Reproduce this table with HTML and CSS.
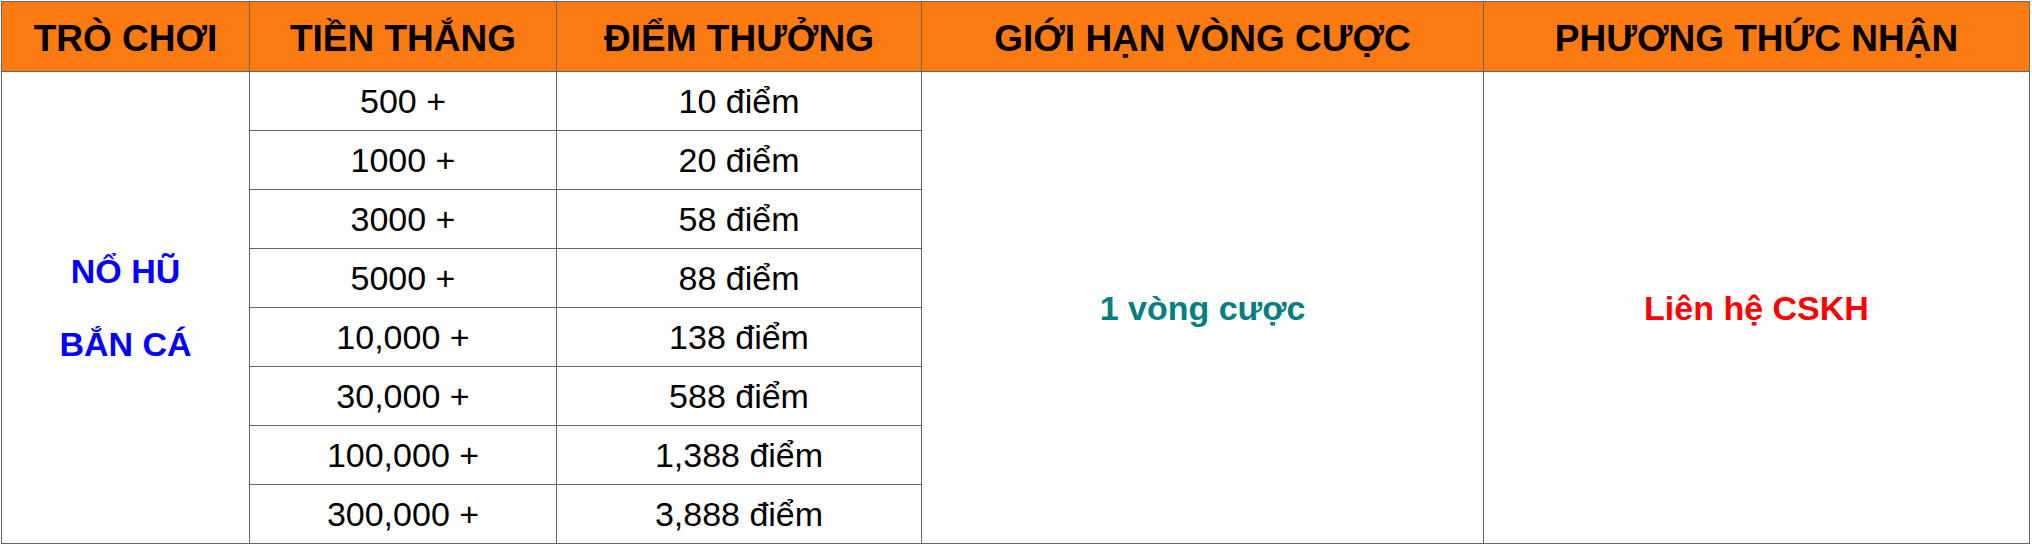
FILE: index.html
```html
<!DOCTYPE html>
<html lang="vi">
<head>
<meta charset="utf-8">
<title>Bảng thưởng</title>
<link rel="stylesheet" href="styles.css">
</head>
<body>
<div class="table">
  <div class="cell head">TRÒ CHƠI</div>
  <div class="cell head">TIỀN THẮNG</div>
  <div class="cell head">ĐIỂM THƯỞNG</div>
  <div class="cell head">GIỚI HẠN VÒNG CƯỢC</div>
  <div class="cell head">PHƯƠNG THỨC NHẬN</div>

  <div class="cell span game"><div class="game-text">NỔ HŨ<br>BẮN CÁ</div></div>
  <div class="cell">500 +</div>
  <div class="cell">10 điểm</div>
  <div class="cell span col4 wager">1 vòng cược</div>
  <div class="cell span col5 contact">Liên hệ CSKH</div>

  <div class="cell">1000 +</div>
  <div class="cell">20 điểm</div>
  <div class="cell">3000 +</div>
  <div class="cell">58 điểm</div>
  <div class="cell">5000 +</div>
  <div class="cell">88 điểm</div>
  <div class="cell">10,000 +</div>
  <div class="cell">138 điểm</div>
  <div class="cell">30,000 +</div>
  <div class="cell">588 điểm</div>
  <div class="cell">100,000 +</div>
  <div class="cell">1,388 điểm</div>
  <div class="cell">300,000 +</div>
  <div class="cell">3,888 điểm</div>
</div>
</body>
</html>
```
FILE: styles.css
```css
html, body {
  margin: 0;
  padding: 0;
  background: #ffffff;
}
body {
  font-family: "Liberation Sans", Arial, sans-serif;
  color: #000000;
}
.table {
  margin: 1px 0 0 1px;
  display: grid;
  grid-template-columns: 248px 307px 365px 562px 546px;
  grid-template-rows: 70px repeat(8, 59px);
  width: 2029px;
  border-left: 1px solid #666666;
  border-top: 1px solid #666666;
  box-sizing: border-box;
}
.cell {
  box-sizing: border-box;
  border-right: 1px solid #666666;
  border-bottom: 1px solid #666666;
  display: flex;
  align-items: center;
  justify-content: center;
  font-size: 34px;
  line-height: 1;
  white-space: nowrap;
}
.head {
  background: #fb7a12;
  font-weight: bold;
  font-size: 37px;
  padding-top: 3px;
}
.span {
  grid-row: 2 / span 8;
}
.game {
  grid-column: 1;
}
.col4 {
  grid-column: 4;
}
.col5 {
  grid-column: 5;
}
.game-text {
  color: #0000ff;
  font-weight: bold;
  font-size: 34px;
  line-height: 73px;
  text-align: center;
}
.wager {
  color: #008080;
  font-weight: bold;
  font-size: 34px;
}
.contact {
  color: #ff0000;
  font-weight: bold;
  font-size: 34px;
}
```
